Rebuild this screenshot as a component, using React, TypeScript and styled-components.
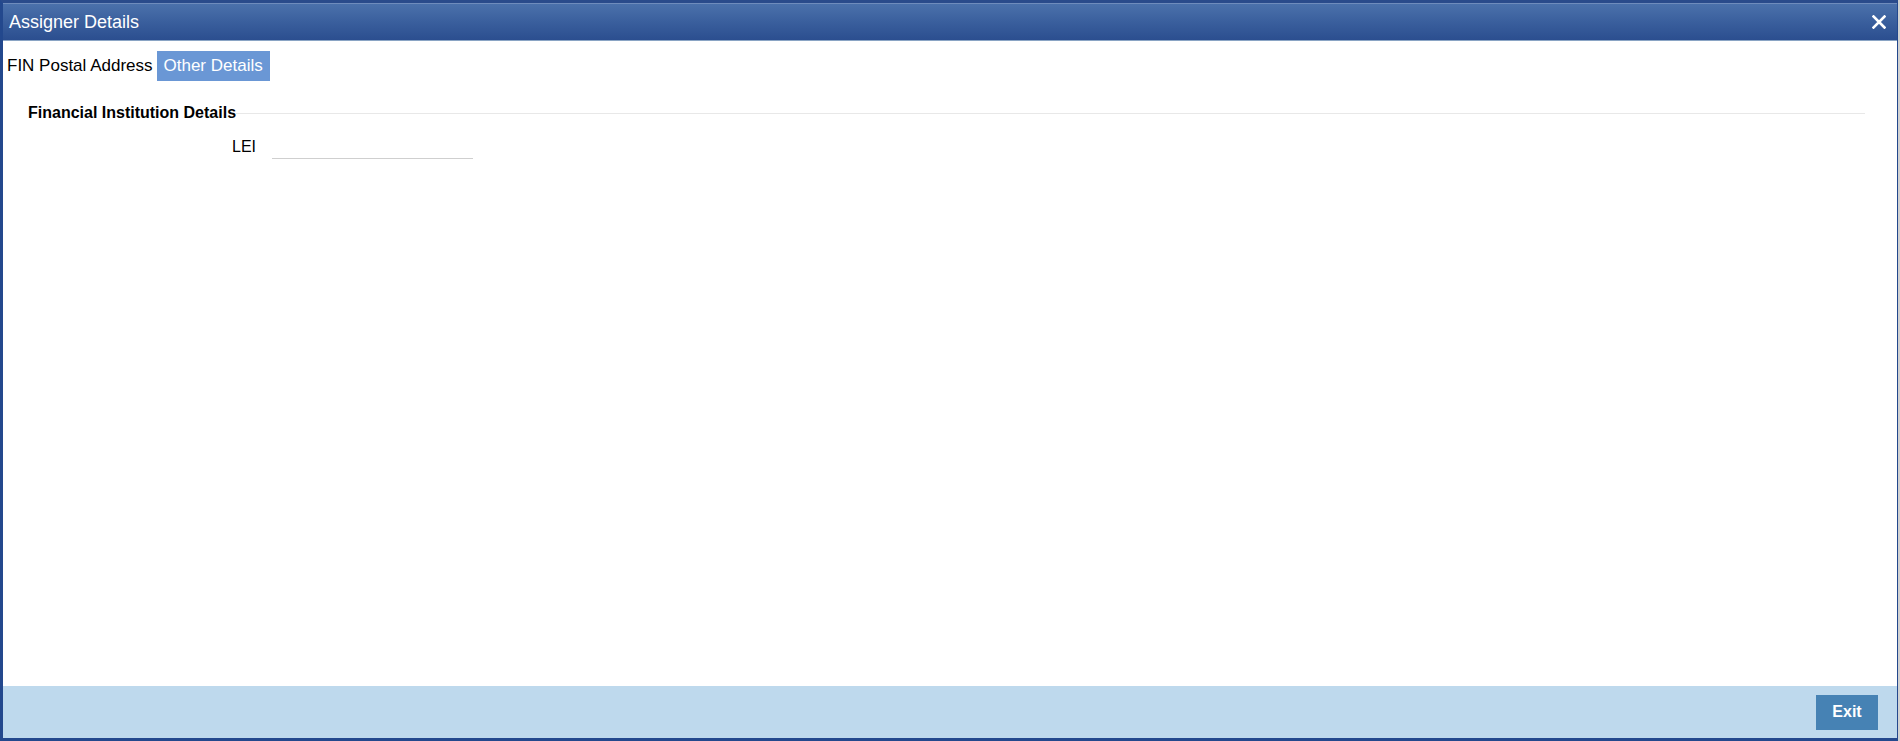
import React from "react";
import styled, { createGlobalStyle } from "styled-components";

const GlobalStyle = createGlobalStyle`
  html, body {
    margin: 0;
    padding: 0;
    background: #d2d2d2;
    font-family: Arial, "Liberation Sans", sans-serif;
  }
  * { box-sizing: border-box; }
`;

const Dialog = styled.div`
  width: 1898px;
  height: 741px;
  display: flex;
  flex-direction: column;
  border-top: 3px solid #2a4b8b;
  border-left: 3px solid #23488d;
  border-right: 1px solid #23488d;
  border-bottom: 3px solid #23488d;
  background: #ffffff;
`;

const Header = styled.div`
  height: 38px;
  flex: none;
  display: flex;
  align-items: center;
  justify-content: space-between;
  padding: 0 10px 0 6px;
  border-top: 1px solid #6f8cbc;
  border-bottom: 1px solid #8aa4c4;
  background: linear-gradient(to bottom, #4b71ab 0%, #3a5f9d 50%, #2b4e8f 100%);
`;

const Title = styled.h1`
  margin: 0;
  font-size: 18px;
  font-weight: normal;
  color: #ffffff;
  font-family: Arial, "Liberation Sans", sans-serif;
`;

const CloseButton = styled.button`
  border: none;
  background: none;
  padding: 0;
  width: 16px;
  height: 16px;
  display: flex;
  align-items: center;
  justify-content: center;
  cursor: pointer;
`;

const Content = styled.div`
  flex: 1;
  display: flex;
  flex-direction: column;
  background: #ffffff;
`;

const TabList = styled.div`
  display: flex;
  align-items: stretch;
  gap: 0;
  margin-top: 10px;
  height: 30px;
`;

const Tab = styled.div<{ $active?: boolean }>`
  display: flex;
  align-items: center;
  padding: 0 ${(p) => (p.$active ? "7px" : "4px")};
  font-size: 17px;
  color: ${(p) => (p.$active ? "#ffffff" : "#000000")};
  background: ${(p) => (p.$active ? "#6a97d5" : "transparent")};
  cursor: pointer;
`;

const Section = styled.div`
  display: flex;
  flex-direction: column;
  margin: 22px 32px 0 25px;
`;

const Legend = styled.div`
  display: flex;
  align-items: center;
  height: 20px;
`;

const LegendText = styled.span`
  font-size: 16px;
  font-weight: bold;
  color: #000000;
  white-space: nowrap;
`;

const LegendLine = styled.div`
  flex: 1;
  height: 1px;
  background: #e8e8e8;
`;

const FieldRow = styled.div`
  display: flex;
  align-items: center;
  gap: 16px;
  margin-top: 12px;
`;

const Label = styled.label`
  width: 228px;
  text-align: right;
  font-size: 16px;
  color: #000000;
`;

const Input = styled.input`
  width: 201px;
  height: 24px;
  border: none;
  border-bottom: 1px solid #cfcfcf;
  outline: none;
  font-size: 14px;
  font-family: Arial, "Liberation Sans", sans-serif;
  background: transparent;
`;

const Footer = styled.div`
  height: 52px;
  flex: none;
  display: flex;
  align-items: center;
  justify-content: flex-end;
  padding-right: 19px;
  background: #bed9ed;
`;

const ExitButton = styled.button`
  width: 62px;
  height: 35px;
  border: none;
  background: #4682b4;
  color: #ffffff;
  font-size: 16px;
  font-weight: bold;
  font-family: Arial, "Liberation Sans", sans-serif;
  cursor: pointer;
`;

export default function App() {
  return (
    <>
      <GlobalStyle />
      <Dialog>
        <Header>
          <Title>Assigner Details</Title>
          <CloseButton aria-label="Close">
            <svg width="14" height="14" viewBox="0 0 14 14">
              <path d="M1.5 1.5 L12.5 12.5 M12.5 1.5 L1.5 12.5" stroke="#ffffff" strokeWidth="2.6" strokeLinecap="square" />
            </svg>
          </CloseButton>
        </Header>
        <Content>
          <TabList>
            <Tab>FIN Postal Address</Tab>
            <Tab $active>Other Details</Tab>
          </TabList>
          <Section>
            <Legend>
              <LegendText>Financial Institution Details</LegendText>
              <LegendLine />
            </Legend>
            <FieldRow>
              <Label>LEI</Label>
              <Input type="text" />
            </FieldRow>
          </Section>
        </Content>
        <Footer>
          <ExitButton>Exit</ExitButton>
        </Footer>
      </Dialog>
    </>
  );
}
